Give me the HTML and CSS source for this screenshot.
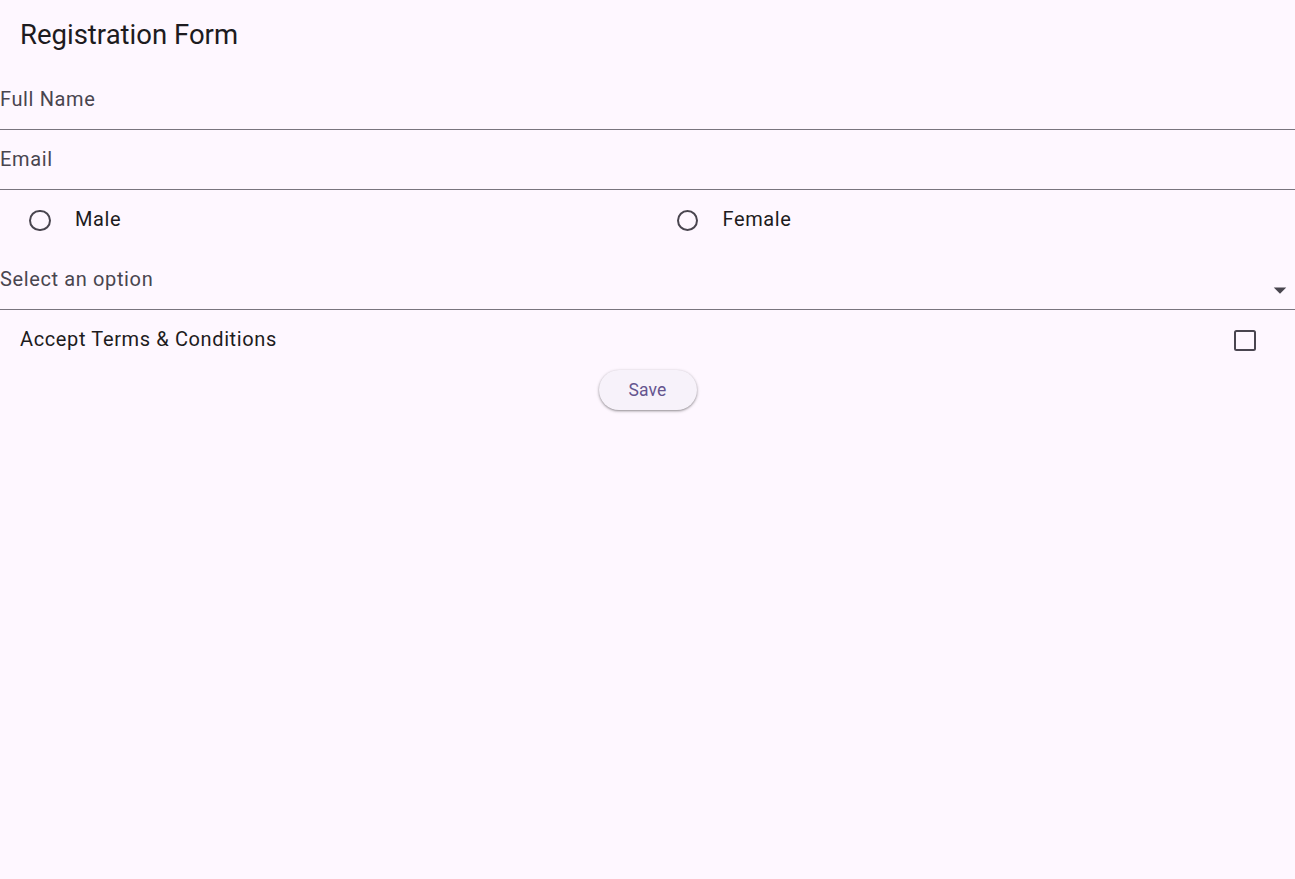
FILE: index.html
```html
<!DOCTYPE html>
<html lang="en">
<head>
<meta charset="utf-8">
<title>Registration Form</title>
<link rel="stylesheet" href="styles.css">
</head>
<body>
<div class="page">
  <header class="appbar"><h1 class="title">Registration Form</h1></header>
  <div class="field"><span class="label">Full Name</span></div>
  <div class="field"><span class="label">Email</span></div>
  <div class="radios">
    <div class="radio-item">
      <span class="radio-slot"><span class="radio"></span></span>
      <span class="radio-text">Male</span>
    </div>
    <div class="radio-item">
      <span class="radio-slot"><span class="radio"></span></span>
      <span class="radio-text">Female</span>
    </div>
  </div>
  <div class="field dropdown">
    <span class="label">Select an option</span>
    <svg class="arrow" width="30" height="30" viewBox="0 0 24 24"><path d="M7 10l5 5 5-5z" fill="#49454f"/></svg>
  </div>
  <div class="check-row">
    <span class="check-text">Accept Terms &amp; Conditions</span>
    <span class="check-slot"><span class="checkbox"></span></span>
  </div>
  <div class="actions">
    <button class="save">Save</button>
  </div>
</div>
</body>
</html>
```
FILE: styles.css
```css
html, body {
  margin: 0;
  padding: 0;
  background: #fef7ff;
}
body {
  font-family: Roboto, "Noto Sans", sans-serif;
  color: #1d1b20;
  width: 1295px;
  height: 879px;
  overflow: hidden;
}
.page {
  display: flex;
  flex-direction: column;
}
.appbar {
  height: 70px;
  display: flex;
  align-items: center;
  padding: 0 20px;
  box-sizing: border-box;
}
.title {
  margin: 0;
  font-size: 27.5px;
  font-weight: 400;
  line-height: 34px;
  color: #1d1b20;
  margin-top: -1px;
}
.field {
  height: 60px;
  box-sizing: border-box;
  border-bottom: 1px solid #79747e;
  display: flex;
  align-items: center;
}
.label {
  font-size: 20px;
  letter-spacing: 0.625px;
  color: #49454f;
  line-height: 28px;
  margin-top: -2px;
}
.radios {
  display: flex;
  height: 60px;
}
.radio-item {
  flex: 1;
  display: flex;
  align-items: center;
}
.radio-slot {
  width: 80px;
  height: 60px;
  display: flex;
  align-items: center;
  justify-content: center;
  margin-right: -5px;
}
.radio {
  width: 17.5px;
  height: 17.5px;
  border: 2.5px solid #49454f;
  border-radius: 50%;
  margin-top: 1px;
}
.radio-text {
  font-size: 20px;
  letter-spacing: 0.625px;
  line-height: 28px;
  color: #1d1b20;
  margin-top: -2px;
}
.dropdown {
  position: relative;
}
.arrow {
  position: absolute;
  right: 0;
  top: 25px;
}
.check-row {
  height: 60px;
  display: flex;
  align-items: center;
  padding: 0 35px 0 20px;
}
.check-text {
  flex: 1;
  font-size: 20px;
  letter-spacing: 0.625px;
  line-height: 28px;
  color: #1d1b20;
  margin-top: -2px;
}
.check-slot {
  width: 30px;
  height: 30px;
  display: flex;
  align-items: center;
  justify-content: center;
  margin-top: 1px;
}
.checkbox {
  width: 17.5px;
  height: 17.5px;
  border: 2.5px solid #49454f;
  border-radius: 2.5px;
}
.actions {
  display: flex;
  justify-content: center;
  padding-top: 0;
}
.save {
  height: 40px;
  width: 98px;
  border: none;
  border-radius: 20px;
  background: #f7f2fa;
  color: #65558f;
  font-family: Roboto, "Noto Sans", sans-serif;
  font-size: 17.5px;
  font-weight: 400;
  letter-spacing: 0.125px;
  box-shadow: 0 1px 2px rgba(0,0,0,0.3), 0 1px 3px 1px rgba(0,0,0,0.12);
  padding: 0;
  cursor: pointer;
}
```
